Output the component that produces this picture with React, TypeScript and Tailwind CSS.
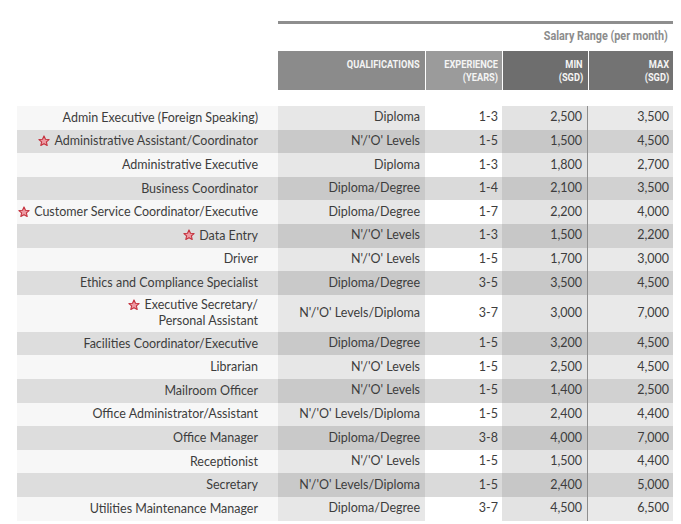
import React from 'react';

type Row = {
    title: string[];
    star?: boolean;
    qual: string;
    exp: string;
    min: string;
    max: string;
};

const rows: Row[] = [
    { title: ['Admin Executive (Foreign Speaking)'], qual: 'Diploma', exp: '1-3', min: '2,500', max: '3,500' },
    { title: ['Administrative Assistant/Coordinator'], star: true, qual: "N'/'O' Levels", exp: '1-5', min: '1,500', max: '4,500' },
    { title: ['Administrative Executive'], qual: 'Diploma', exp: '1-3', min: '1,800', max: '2,700' },
    { title: ['Business Coordinator'], qual: 'Diploma/Degree', exp: '1-4', min: '2,100', max: '3,500' },
    { title: ['Customer Service Coordinator/Executive'], star: true, qual: 'Diploma/Degree', exp: '1-7', min: '2,200', max: '4,000' },
    { title: ['Data Entry'], star: true, qual: "N'/'O' Levels", exp: '1-3', min: '1,500', max: '2,200' },
    { title: ['Driver'], qual: "N'/'O' Levels", exp: '1-5', min: '1,700', max: '3,000' },
    { title: ['Ethics and Compliance Specialist'], qual: 'Diploma/Degree', exp: '3-5', min: '3,500', max: '4,500' },
    { title: ['Executive Secretary/', 'Personal Assistant'], star: true, qual: "N'/'O' Levels/Diploma", exp: '3-7', min: '3,000', max: '7,000' },
    { title: ['Facilities Coordinator/Executive'], qual: 'Diploma/Degree', exp: '1-5', min: '3,200', max: '4,500' },
    { title: ['Librarian'], qual: "N'/'O' Levels", exp: '1-5', min: '2,500', max: '4,500' },
    { title: ['Mailroom Officer'], qual: "N'/'O' Levels", exp: '1-5', min: '1,400', max: '2,500' },
    { title: ['Office Administrator/Assistant'], qual: "N'/'O' Levels/Diploma", exp: '1-5', min: '2,400', max: '4,400' },
    { title: ['Office Manager'], qual: 'Diploma/Degree', exp: '3-8', min: '4,000', max: '7,000' },
    { title: ['Receptionist'], qual: "N'/'O' Levels", exp: '1-5', min: '1,500', max: '4,400' },
    { title: ['Secretary'], qual: "N'/'O' Levels/Diploma", exp: '1-5', min: '2,400', max: '5,000' },
    { title: ['Utilities Maintenance Manager'], qual: 'Diploma/Degree', exp: '3-7', min: '4,500', max: '6,500' },
];

const Star = () => (
    <svg width="12" height="12" viewBox="0 0 24 24" className="inline-block mr-[4px] -mt-[3px] align-middle">
        <path
            d="M12 1.8l3 6.6 7.2.7-5.4 4.8 1.6 7.1L12 17.3l-6.4 3.7 1.6-7.1L1.8 9.1 9 8.4z"
            fill="#ee9aa2"
            stroke="#c4313d"
            strokeWidth="2.2"
            strokeLinejoin="round"
        />
    </svg>
);

const headFont = { fontFamily: "'Liberation Sans Narrow', 'Roboto', 'Liberation Sans', sans-serif" };

// condensed header label, squeezed from the right edge
const Cond = ({ children }: { children: React.ReactNode }) => (
    <span className="inline-block origin-right scale-x-[0.84] whitespace-nowrap">{children}</span>
);

const SalaryTable: React.FC = () => {
    return (
        <div className="w-[681px] h-[524px] bg-white overflow-hidden text-[#3d3d3d]" style={{ fontFamily: "Lato, 'Open Sans', sans-serif" }}>
            <div className="ml-[278px] w-[395px]">
                <div className="mt-[21px] h-[3px] bg-[#8e8e8e]" />
                <div className="mt-[6px] h-[12px] leading-[12px] pr-[5px] text-right text-[12px] font-bold text-[#8c8c8c]" style={headFont}>
                    <span className="inline-block origin-right scale-x-[0.9] whitespace-nowrap">Salary Range (per month)</span>
                </div>
                <div className="mt-[9px] grid grid-cols-[147px_77px_86px_85px] h-[39px] text-[#f4f4f4] text-[11px] font-bold leading-[13px]" style={headFont}>
                    <div className="bg-[#8b8b8b] text-right pt-[7px] pr-[5px]"><Cond>QUALIFICATIONS</Cond></div>
                    <div className="bg-[#9b9b9b] border-l border-white text-right pt-[7px] pr-[4px]"><Cond>EXPERIENCE</Cond><br /><Cond>(YEARS)</Cond></div>
                    <div className="bg-[#6e6e6e] border-l border-white text-right pt-[7px] pr-[5px]"><Cond>MIN</Cond><br /><Cond>(SGD)</Cond></div>
                    <div className="bg-[#737373] border-l border-white text-right pt-[7px] pr-[4px]"><Cond>MAX</Cond><br /><Cond>(SGD)</Cond></div>
                </div>
            </div>

            <div className="mt-[16px] ml-[17px] w-[656px] text-[12.5px]">
                {rows.map((r, i) => {
                    const dark = i % 2 === 1;
                    const tall = r.title.length > 1;
                    return (
                        <div
                            key={i}
                            className={`grid grid-cols-[261px_147px_77px_86px_85px] ${tall ? 'h-[37px]' : 'h-[23.6px]'}`}
                        >
                            <div className={`flex flex-col justify-center items-end pr-[20px] leading-[16px] ${dark ? 'bg-[#dddddd]' : 'bg-[#f7f7f7]'}`}>
                                {r.title.map((t, j) => (
                                    <div key={j} className="whitespace-nowrap">
                                        {r.star && j === 0 && <Star />}
                                        {t}
                                    </div>
                                ))}
                            </div>
                            <div className={`flex items-center justify-end pr-[5px] ${dark ? 'bg-[#c9c9c9]' : 'bg-[#e7e7e7]'}`}>{r.qual}</div>
                            <div className={`flex items-center justify-end pr-[4px] ${dark ? 'bg-[#dadada]' : 'bg-white'}`}>{r.exp}</div>
                            <div className={`flex items-center justify-end pr-[5px] border-r border-[#8f8f8f] ${dark ? 'bg-[#c7c7c7]' : 'bg-[#e3e3e3]'}`}>{r.min}</div>
                            <div className={`flex items-center justify-end pr-[4px] ${dark ? 'bg-[#d1d1d1]' : 'bg-[#e9e9e9]'}`}>{r.max}</div>
                        </div>
                    );
                })}
            </div>
        </div>
    );
};

export default function App() {
    return <SalaryTable />;
}
